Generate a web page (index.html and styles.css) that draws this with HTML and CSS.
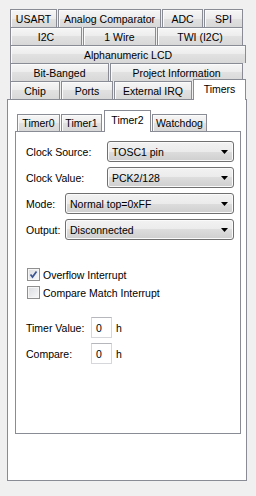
FILE: index.html
```html
<!DOCTYPE html>
<html lang="en">
<head>
    <meta charset="UTF-8">
    <title>Timers</title>
    <link rel="stylesheet" href="styles.css">
</head>
<body>
    <div class="window">
        <div class="tabstrip">
            <div class="tab-row">
                <span class="tab t-usart">USART</span>
                <span class="tab t-analog">Analog Comparator</span>
                <span class="tab t-adc">ADC</span>
                <span class="tab t-spi">SPI</span>
            </div>
            <div class="tab-row">
                <span class="tab t-i2c">I2C</span>
                <span class="tab t-wire">1 Wire</span>
                <span class="tab t-twi">TWI (I2C)</span>
            </div>
            <div class="tab-row">
                <span class="tab t-lcd">Alphanumeric LCD</span>
            </div>
            <div class="tab-row">
                <span class="tab t-bit">Bit-Banged</span>
                <span class="tab t-project">Project Information</span>
            </div>
            <div class="tab-row">
                <span class="tab t-chip">Chip</span>
                <span class="tab t-ports">Ports</span>
                <span class="tab t-irq">External IRQ</span>
                <span class="tab t-timers active">Timers</span>
            </div>
        </div>

        <div class="panel">
            <div class="subtabs">
                <span class="tab t-timer0">Timer0</span>
                <span class="tab t-timer1">Timer1</span>
                <span class="tab t-timer2 active">Timer2</span>
                <span class="tab t-watchdog">Watchdog</span>
            </div>

            <div class="subpanel">
                <div class="field">
                    <label class="lbl-wide">Clock Source:</label>
                    <div class="combo combo-short">TOSC1 pin
                        <svg width="7" height="4" viewBox="0 0 7 4"><path d="M0 0H7L3.5 4Z" fill="#000"/></svg>
                    </div>
                </div>
                <div class="field">
                    <label class="lbl-wide">Clock Value:</label>
                    <div class="combo combo-short">PCK2/128
                        <svg width="7" height="4" viewBox="0 0 7 4"><path d="M0 0H7L3.5 4Z" fill="#000"/></svg>
                    </div>
                </div>
                <div class="field">
                    <label class="lbl-narrow">Mode:</label>
                    <div class="combo combo-long">Normal top=0xFF
                        <svg width="7" height="4" viewBox="0 0 7 4"><path d="M0 0H7L3.5 4Z" fill="#000"/></svg>
                    </div>
                </div>
                <div class="field">
                    <label class="lbl-narrow">Output:</label>
                    <div class="combo combo-long">Disconnected
                        <svg width="7" height="4" viewBox="0 0 7 4"><path d="M0 0H7L3.5 4Z" fill="#000"/></svg>
                    </div>
                </div>

                <div class="checks">
                    <div class="check">
                        <span class="box">
                            <svg width="9" height="9" viewBox="0 0 9 9"><path d="M1.5 4.5L3.5 7L7.5 1.5" fill="none" stroke="#3a5592" stroke-width="1.7"/></svg>
                        </span>
                        Overflow Interrupt
                    </div>
                    <div class="check">
                        <span class="box"></span>
                        Compare Match Interrupt
                    </div>
                </div>

                <div class="values">
                    <div class="value-row">
                        <label class="lbl-value">Timer Value:</label>
                        <span class="textbox">0</span>
                        <span class="unit">h</span>
                    </div>
                    <div class="value-row">
                        <label class="lbl-value">Compare:</label>
                        <span class="textbox">0</span>
                        <span class="unit">h</span>
                    </div>
                </div>
            </div>
        </div>
    </div>
</body>
</html>
```

FILE: styles.css
```css
body {
    margin: 0;
    background-color: #f0f0f0;
    font-family: "Liberation Sans", Arial, sans-serif;
    font-size: 10.5px;
    color: #000;
}

.window {
    padding: 9px 0 0 7px;
    width: 240px;
}

/* outer multi-row tabs */
.tabstrip {
    padding-left: 3px;
}

.tab-row {
    display: flex;
    align-items: flex-end;
    height: 18px;
}

.tab {
    box-sizing: border-box;
    display: flex;
    align-items: center;
    justify-content: center;
    height: 18px;
    margin-right: 1px;
    border: 1px solid #898c95;
    border-bottom: none;
    background: linear-gradient(to bottom, #f6f6f6, #ececec 50%, #e1e1e1 50%, #d8d8d8);
    box-shadow: inset 1px 1px 0 #fbfbfb;
    white-space: nowrap;
}

.tab.active {
    position: relative;
    z-index: 1;
    height: 21px;
    margin-bottom: -1px;
    padding-bottom: 3px;
    background: #fff;
    box-shadow: none;
}

.t-usart { width: 47px; }
.t-analog { width: 103px; }
.t-adc { width: 41px; }
.t-spi { width: 39px; }
.t-i2c { width: 72px; }
.t-wire { width: 73px; }
.t-twi { width: 86px; }
.t-lcd { width: 236px; }
.t-bit { width: 99px; }
.t-project { width: 133px; }
.t-chip { width: 50px; }
.t-ports { width: 52px; }
.t-irq { width: 78px; }
.t-timers { width: 53px; }

.panel {
    box-sizing: border-box;
    width: 240px;
    height: 382px;
    border: 1px solid #898c95;
    background: #fff;
}

/* inner tabs */
.subtabs {
    display: flex;
    align-items: flex-end;
    height: 21px;
    margin: 10px 0 0 9px;
}

.subtabs .tab {
    height: 17px;
}

.subtabs .tab.active {
    height: 22px;
    padding-bottom: 4px;
}

.t-timer0 { width: 43px; }
.t-timer1 { width: 41px; margin-right: 2px; }
.t-timer2 { width: 47px; }
.t-watchdog { width: 55px; }

.subpanel {
    box-sizing: border-box;
    width: 226px;
    height: 303px;
    margin-left: 7px;
    padding: 9px 0 0 10px;
    border: 1px solid #898c95;
}

.field {
    display: flex;
    align-items: center;
    height: 21px;
    margin-bottom: 5px;
}

.lbl-wide { width: 81px; }
.lbl-narrow { width: 39px; }

.combo {
    box-sizing: border-box;
    display: flex;
    align-items: center;
    justify-content: space-between;
    height: 21px;
    padding: 0 5px 0 4px;
    border: 1px solid #707070;
    border-radius: 3px;
    background: linear-gradient(to bottom, #f2f2f2, #ebebeb 50%, #dddddd 50%, #cfcfcf);
    box-shadow: inset 0 0 0 1px #fafafa;
}

.combo-short { width: 127px; }
.combo-long { width: 169px; }

/* margins collapse with the field above, so this is the full gap */
.checks {
    margin-top: 28px;
}

.check {
    display: flex;
    align-items: center;
    height: 13px;
    margin-bottom: 5px;
}

.box {
    box-sizing: border-box;
    display: flex;
    align-items: center;
    justify-content: center;
    width: 13px;
    height: 13px;
    margin: 0 3px 0 1px;
    border: 1px solid #8f8f8f;
    background: linear-gradient(135deg, #dadcdf, #eff0f2 70%, #f8f8f8);
    box-shadow: inset 0 0 0 1px #f6f6f6;
}

.values {
    margin-top: 18px;
}

.value-row {
    display: flex;
    align-items: center;
    height: 21px;
    margin-bottom: 5px;
}

.lbl-value { width: 65px; }

.textbox {
    box-sizing: border-box;
    display: flex;
    align-items: center;
    width: 21px;
    height: 21px;
    padding-left: 4px;
    border: 1px solid #d5d7db;
    border-top-color: #b5b7bd;
    background: #fff;
}

.unit {
    margin-left: 4px;
}
```
